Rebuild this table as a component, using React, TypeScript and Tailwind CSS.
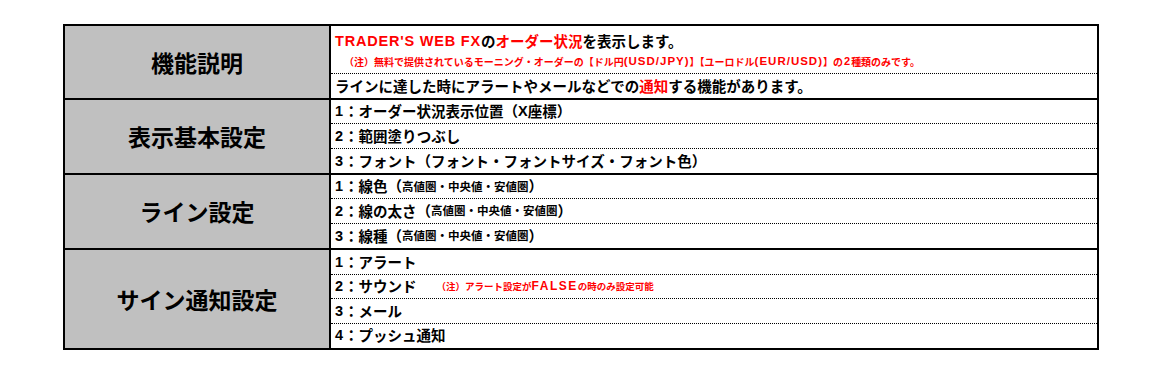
import React from 'react';

const font = { fontFamily: '"Noto Sans CJK JP", "Noto Sans", sans-serif' };

function Row({ children, last = false }: { children: React.ReactNode; last?: boolean }) {
  return (
    <div
      className={`h-[25px] flex items-center pl-[4px] text-[14.5px] font-bold text-black leading-none whitespace-nowrap ${
        last ? '' : 'border-b border-dotted border-black'
      }`}
    >
      {children}
    </div>
  );
}

// latin text in the sheet renders wider than the CJK font's own latin
function Latin({ children, className = '' }: { children: React.ReactNode; className?: string }) {
  return <span className={`font-['Liberation_Sans',sans-serif] ${className}`}>{children}</span>;
}

function Num({ n }: { n: string }) {
  return <Latin className="mr-[1px]">{n}</Latin>;
}

function Section({
  title,
  children,
  className = '',
}: {
  title: string;
  children: React.ReactNode;
  className?: string;
}) {
  return (
    <div className={`flex ${className}`}>
      <div className="w-[266px] shrink-0 bg-[#c0c0c0] border-r-2 border-black flex items-center justify-center">
        <span className="text-[23px] font-bold text-black">{title}</span>
      </div>
      <div className="flex-1 flex flex-col">{children}</div>
    </div>
  );
}

const zone = <span className="text-[11.5px]">高値圏・中央値・安値圏</span>;

export default function App() {
  return (
    <div className="w-[1163px] h-[376px] bg-white" style={font}>
      <div className="pt-[24px] pl-[63px]">
        <div className="w-[1036px] border-2 border-black">
          <Section title="機能説明" className="h-[74px] border-b-2 border-black">
            <div className="h-[49px] flex flex-col pl-[4px] border-b border-dotted border-black">
              <div className="h-[29px] pt-[2px] flex items-center text-[14.5px] font-bold leading-none whitespace-nowrap">
                <Latin className="text-[#ff0000] tracking-[0.8px]">TRADER'S WEB FX</Latin>
                <span className="text-black">の</span>
                <span className="text-[#ff0000]">オーダー状況</span>
                <span className="text-black">を表示します。</span>
              </div>
              <div className="flex-1 flex items-center pl-[9px] pb-[4px] text-[10px] font-bold text-[#ff0000] leading-none whitespace-nowrap">
                （注）無料で提供されているモーニング・オーダーの【ドル円
                <Latin className="text-[11.5px] tracking-[1px]">(USD/JPY)</Latin>】【ユーロドル
                <Latin className="text-[11.5px] tracking-[1px]">(EUR/USD)</Latin>】の
                <Latin className="text-[11px] mx-[1px]">2</Latin>種類のみです。
              </div>
            </div>
            <Row last>
              ラインに達した時にアラートやメールなどでの<span className="text-[#ff0000]">通知</span>する機能があります。
            </Row>
          </Section>

          <Section title="表示基本設定" className="h-[75px] border-b-2 border-black">
            <Row>
              <Num n="1" />：オーダー状況表示位置（<Latin>X</Latin>座標）
            </Row>
            <Row>
              <Num n="2" />：範囲塗りつぶし
            </Row>
            <Row last>
              <Num n="3" />：フォント（フォント・フォントサイズ・フォント色）
            </Row>
          </Section>

          <Section title="ライン設定" className="h-[75px] border-b-2 border-black">
            <Row>
              <Num n="1" />：線色（{zone}）
            </Row>
            <Row>
              <Num n="2" />：線の太さ（{zone}）
            </Row>
            <Row last>
              <Num n="3" />：線種（{zone}）
            </Row>
          </Section>

          <Section title="サイン通知設定" className="h-[98px]">
            <Row>
              <Num n="1" />：アラート
            </Row>
            <Row>
              <Num n="2" />：サウンド
              <span className="ml-[20px] text-[9.5px] text-[#ff0000]">
                （注）アラート設定が<Latin className="text-[12px] tracking-[1.5px]">FALSE</Latin>の時のみ設定可能
              </span>
            </Row>
            <Row>
              <Num n="3" />：メール
            </Row>
            <Row last>
              <Num n="4" />：プッシュ通知
            </Row>
          </Section>
        </div>
      </div>
    </div>
  );
}
